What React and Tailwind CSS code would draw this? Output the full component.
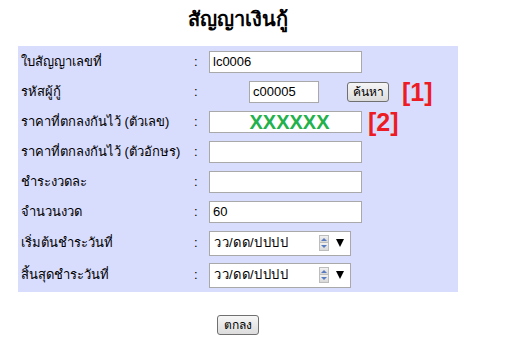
import React from 'react'

const font = { fontFamily: '"Liberation Sans", Tahoma, "Noto Sans", sans-serif' }

function TextBox({ value = '', className = 'w-[153px]' }) {
  return (
    <div className={`h-[22px] border border-[#a9a9a9] bg-white flex items-center px-[3px] text-[13px] text-black ${className}`}>
      {value}
    </div>
  )
}

function GrayButton({ children, className = '' }) {
  return (
    <div className={`h-[20px] px-[6px] flex items-center justify-center rounded-[3px] border border-[#707070] bg-gradient-to-b from-[#f6f6f6] to-[#dcdcdc] text-[12px] text-black ${className}`}>
      {children}
    </div>
  )
}

function DateBox() {
  return (
    <div className="w-[142px] h-[25px] border border-[#a9a9a9] bg-white flex items-center pl-[4px] pr-[6px] text-[13px] text-black">
      <span className="flex-1 tracking-[0.5px]">วว/ดด/ปปปป</span>
      <div className="flex flex-col mr-[7px]">
        <div className="w-[10px] h-[8px] bg-gradient-to-b from-[#f2f2f2] to-[#d8d8d8] border border-[#bdbdbd] flex items-center justify-center">
          <div className="w-0 h-0 border-l-[3px] border-r-[3px] border-b-[3px] border-l-transparent border-r-transparent border-b-[#5a7bc0]" />
        </div>
        <div className="w-[10px] h-[8px] bg-gradient-to-b from-[#f2f2f2] to-[#d8d8d8] border border-t-0 border-[#bdbdbd] flex items-center justify-center">
          <div className="w-0 h-0 border-l-[3px] border-r-[3px] border-t-[3px] border-l-transparent border-r-transparent border-t-[#5a7bc0]" />
        </div>
      </div>
      <div className="w-0 h-0 border-l-[4px] border-r-[4px] border-t-[8px] border-l-transparent border-r-transparent border-t-black" />
    </div>
  )
}

function Row({ label, tall = false, children }) {
  return (
    <div className={`flex items-center ${tall ? 'h-[32px]' : 'h-[30px]'}`}>
      <div className="w-[176px] pl-[3px] text-[13px] text-black">{label}</div>
      <div className="w-[15px] text-[13px] text-black">:</div>
      <div className="flex items-center">{children}</div>
    </div>
  )
}

export default function App() {
  return (
    <div className="w-[509px] h-[345px] bg-white" style={font}>
      <div className="w-[440px] ml-[18px] pt-[4px] h-[46px] text-center text-[20px] font-bold text-black">
        สัญญาเงินกู้
      </div>

      <div className="w-[440px] ml-[18px] bg-[#d8dcfd] pt-[1px] pb-[1px]">
        <Row label="ใบสัญญาเลขที่">
          <TextBox value="lc0006" />
        </Row>
        <Row label="รหัสผู้กู้">
          <TextBox value="c00005" className="w-[70px] ml-[40px]" />
          <GrayButton className="ml-[28px] w-[42px]">ค้นหา</GrayButton>
          <span className="ml-[13px] text-[25px] font-bold text-[#ed1c24] leading-none">[1]</span>
        </Row>
        <Row label="ราคาที่ตกลงกันไว้ (ตัวเลข)">
          <div className="w-[153px] h-[22px] border border-[#a9a9a9] bg-white flex items-center justify-center pl-[8px] text-[20px] font-bold text-[#22b14c] leading-none">
            XXXXXX
          </div>
          <span className="ml-[6px] text-[25px] font-bold text-[#ed1c24] leading-none">[2]</span>
        </Row>
        <Row label="ราคาที่ตกลงกันไว้ (ตัวอักษร)">
          <TextBox />
        </Row>
        <Row label="ชำระงวดละ">
          <TextBox />
        </Row>
        <Row label="จำนวนงวด">
          <TextBox value="60" />
        </Row>
        <Row label="เริ่มต้นชำระวันที่" tall>
          <DateBox />
        </Row>
        <Row label="สิ้นสุดชำระวันที่" tall>
          <DateBox />
        </Row>
      </div>

      <div className="flex justify-center w-[476px] mt-[23px]">
        <GrayButton className="w-[42px]">ตกลง</GrayButton>
      </div>
    </div>
  )
}
